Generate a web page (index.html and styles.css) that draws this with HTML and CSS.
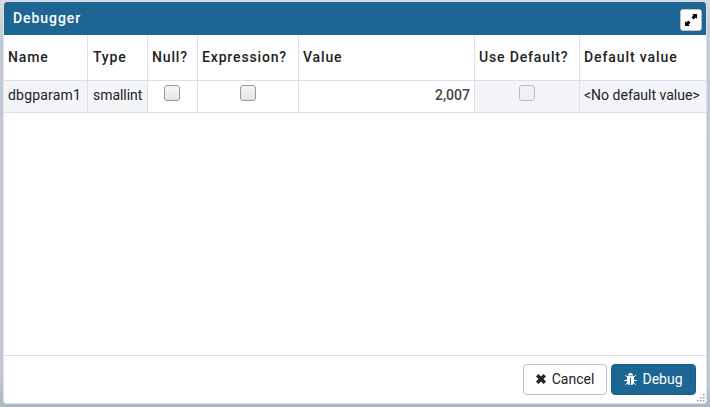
FILE: index.html
```html
<!DOCTYPE html>
<html lang="en">
<head>
<meta charset="utf-8">
<title>Debugger</title>
<link rel="stylesheet" href="styles.css">
</head>
<body>
<div class="dialog">
  <header class="dialog-header">
    <span class="dialog-title">Debugger</span>
    <button class="maximize" aria-label="Maximize">
      <svg width="12" height="12" viewBox="0 0 12 12"><path d="M7.200 0H12v4.800L10.600 3.500 8.700 5.400 6.600 3.300 8.500 1.400zM0 7.200l1.400 1.300 1.900-1.900 2.100 2.100-1.900 1.900L4.800 12H0z"/></svg>
    </button>
  </header>
  <main class="dialog-body">
    <div class="grid">
      <div class="th">Name</div><div class="th type">Type</div><div class="th">Null?</div><div class="th">Expression?</div><div class="th">Value</div><div class="th">Use Default?</div><div class="th last">Default value</div>
      <div class="td locked name">dbgparam1</div><div class="td locked type">smallint</div><div class="td center null"><span class="check"></span></div><div class="td center"><span class="check"></span></div><div class="td number">2,007</div><div class="td locked center"><span class="check disabled"></span></div><div class="td locked last">&lt;No default value&gt;</div>
    </div>
  </main>
  <footer class="dialog-footer">
    <button class="btn cancel"><svg width="10" height="10" viewBox="0 0 10 10"><path d="M2.4 0L5 2.6 7.6 0 10 2.4 7.4 5 10 7.6 7.6 10 5 7.4 2.4 10 0 7.6 2.6 5 0 2.4z"/></svg><span>Cancel</span></button>
    <button class="btn debug"><svg width="13" height="13" viewBox="0 0 13 13"><path d="M4 2.600a2.500 2.600 0 0 1 5 0z"/><path d="M3 3.300h7V9a3.200 3.200 0 0 1-3 3V5H6v7A3.200 3.200 0 0 1 3 9z"/><path class="legs" d="M1.200 2.200L3 3.800h7l1.800-1.600M.2 7.500h3M12.800 7.500h-3M1.500 11.800l2-2.200M11.500 11.800l-2-2.200"/></svg><span>Debug</span></button>
    <svg class="resize" width="8" height="8" viewBox="0 0 8 8"><path d="M6 0h1.500v1.500H6zM3 3h1.500v1.500H3zM6 3h1.500v1.500H6zM0 6h1.500v1.500H0zM3 6h1.500v1.500H3zM6 6h1.500v1.500H6z"/></svg>
  </footer>
</div>
</body>
</html>
```
FILE: styles.css
```css
* { box-sizing: border-box; }
body {
  margin: 0;
  height: 407px;
  padding: 2px 3px 3px;
  overflow: hidden;
  background: linear-gradient(to bottom, #d5d9e2 0, #c3c9d5 40px, #c0c7d3 380px, #adb5c3 407px);
  font-family: Roboto, "Liberation Sans", sans-serif;
  font-size: 14px;
  color: #222;
}
.dialog {
  display: flex;
  flex-direction: column;
  height: 402px;
  border-radius: 4px;
  overflow: hidden;
  background: #fff;
  border: 1px solid #dde0e9;
  border-top: 0;
}
.dialog-header {
  display: flex;
  justify-content: space-between;
  align-items: center;
  height: 33px;
  margin: 0 -1px;
  padding: 3px 5px 0 10px;
  background: #1d6592;
  color: #fff;
}
.dialog-title { font-weight: 500; letter-spacing: .95px; line-height: 20px; margin-top: -5px; }
.maximize {
  display: grid;
  place-items: center;
  width: 22px;
  height: 22px;
  padding: 0;
  border: 1px solid #bac1cd;
  border-radius: 3px;
  background: #fff;
}
.dialog-body { flex: 1; }
.grid {
  display: grid;
  grid-template-columns: 84px 60px 50px 101px 176px 105px 126px;
  grid-template-rows: 46px 32px;
}
.th, .td {
  padding: 0 4px;
  border-right: 1px solid #dde0e9;
  border-bottom: 1px solid #dde0e9;
  white-space: nowrap;
}
.th { font-weight: 500; letter-spacing: .85px; line-height: 44px; }
.td { line-height: 29px; }
.grid .type { padding-left: 5px; }
.td.type { letter-spacing: -.05px; }
.name { letter-spacing: .2px; }
.locked { background: #f3f5f9; }
.grid .last { border-right: 0; }
.th.last { letter-spacing: .9px; }
.number { text-align: right; font-weight: 500; color: #444; }
.center { display: flex; justify-content: center; padding-top: 4px; }
.null { padding-right: 6px; }
.check {
  width: 16px;
  height: 16px;
  border: 1px solid #999;
  border-radius: 3px;
  background: linear-gradient(#f6f6f6, #e6e6e6);
}
.disabled { border-color: #bbb; background: #f1f1f1; }
.dialog-footer {
  position: relative;
  display: flex;
  justify-content: flex-end;
  gap: 4px;
  height: 48px;
  padding: 8px 10px 0;
  border-top: 1px solid #dde0e9;
}
.btn {
  display: flex;
  align-items: center;
  justify-content: center;
  gap: 6px;
  height: 31px;
  padding: 0 0 1px;
  border: 1px solid #b8c0d0;
  border-radius: 4px;
  background: #fff;
  color: #222;
  font: 14px Roboto, "Liberation Sans", sans-serif;
}
.cancel { width: 84px; }
.debug { width: 85px; gap: 5px; background: #1d6592; border-color: #1a5c86; color: #fff; }
.btn svg { fill: currentColor; }
.btn span { position: relative; top: -.5px; }
.btn .legs { fill: none; stroke: currentColor; stroke-width: 1; }
.resize { position: absolute; right: 1px; bottom: 1px; fill: #999; }
```
